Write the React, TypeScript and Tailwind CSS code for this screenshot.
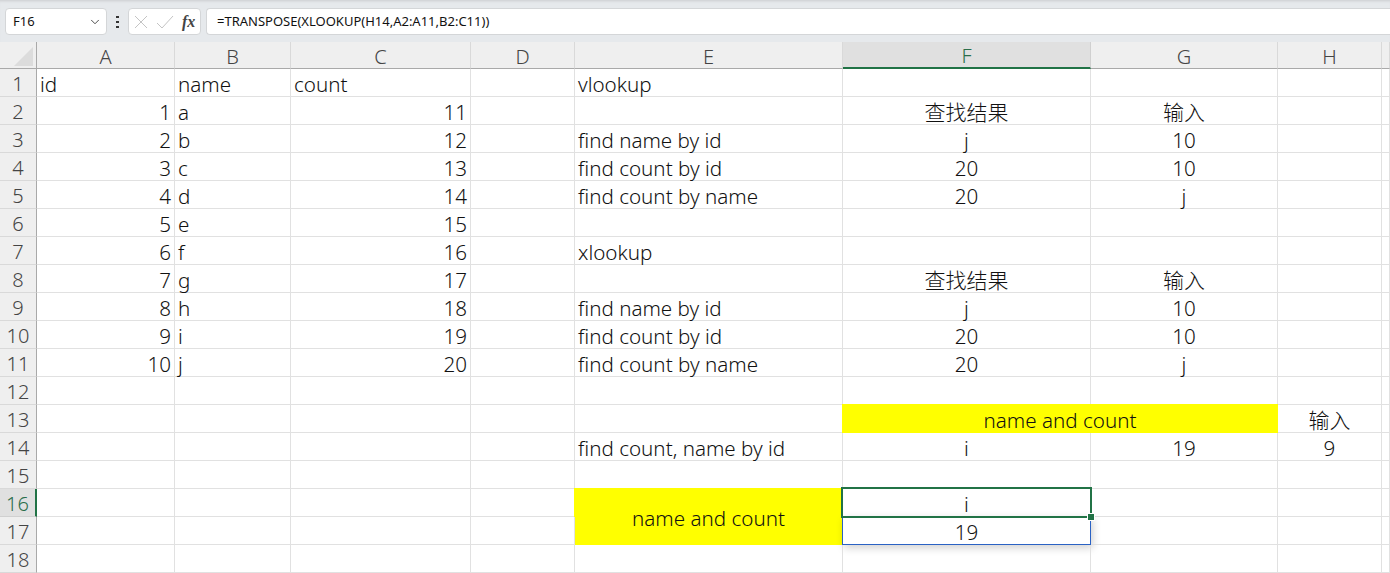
import { ChevronDown } from "lucide-react"

const font = "font-['Noto_Sans','Noto_Sans_CJK_SC',sans-serif]"
const columns = ["A", "B", "C", "D", "E", "F", "G", "H", ""]
const rowCount = 18

type Cell = { text?: string; align?: "l" | "r" | "c"; fill?: boolean; wide?: boolean; tall?: boolean; cjk?: boolean }

const L = (text: string): Cell => ({ text, align: "l" })
const R = (text: string): Cell => ({ text, align: "r" })
const C = (text: string): Cell => ({ text, align: "c" })
const K = (text: string): Cell => ({ text, align: "c", cjk: true })

const cells: Record<string, Cell> = {
  A1: L("id"), B1: L("name"), C1: L("count"), E1: L("vlookup"),
  F2: K("查找结果"), G2: K("输入"),
  E3: L("find name by id"), F3: C("j"), G3: C("10"),
  E4: L("find count by id"), F4: C("20"), G4: C("10"),
  E5: L("find count by name"), F5: C("20"), G5: C("j"),
  E7: L("xlookup"),
  F8: K("查找结果"), G8: K("输入"),
  E9: L("find name by id"), F9: C("j"), G9: C("10"),
  E10: L("find count by id"), F10: C("20"), G10: C("10"),
  E11: L("find count by name"), F11: C("20"), G11: C("j"),
  F13: { text: "name and count", align: "c", fill: true, wide: true }, H13: K("输入"),
  E14: L("find count, name by id"), F14: C("i"), G14: C("19"), H14: C("9"),
  E16: { text: "name and count", align: "c", fill: true, tall: true },
  F16: C("i"), F17: C("19"),
}

"abcdefghij".split("").forEach((name, i) => {
  cells[`A${i + 2}`] = R(String(i + 1))
  cells[`B${i + 2}`] = L(name)
  cells[`C${i + 2}`] = R(String(i + 11))
})

function GridCell({ id }: { id: string }) {
  const cell = cells[id] ?? {}
  const alignClass =
    cell.align === "r" ? "justify-end pr-[3px]" : cell.align === "c" ? "justify-center" : "justify-start pl-[3px]"
  const spanClass = cell.wide ? "col-span-2" : cell.tall ? "row-span-2" : ""
  const fillClass = cell.fill ? "bg-[#ffff00] -ml-px -mt-px border-none" : "border-r border-b border-[#e1e1e1]"

  return (
    <div className={`relative flex items-center whitespace-nowrap pt-[3px] ${alignClass} ${spanClass} ${fillClass}`}>
      <span className={cell.cjk ? "text-[21px]" : ""}>{cell.text}</span>
      {id === "F17" && (
        <div className="absolute -left-px -top-px right-[-1px] bottom-[-1px] border border-[#2a62c4] shadow-[2px_3px_8px_rgba(0,0,0,0.18)]" />
      )}
      {id === "F16" && (
        <>
          <div className="absolute left-[-2px] top-[-2px] right-[-2px] bottom-[-2px] z-10 border-[2px] border-[#217346]" />
          <div className="absolute right-[-4px] bottom-[-4px] z-20 h-[6px] w-[6px] bg-[#217346] outline outline-1 outline-white" />
        </>
      )}
    </div>
  )
}

export default function App() {
  return (
    <div className={`h-[573px] w-[1390px] overflow-hidden bg-white text-[#111] ${font}`}>
      {/* formula bar */}
      <div className="flex h-[42px] items-start bg-[#e6e9ec] pl-[5px] pt-[8px] shadow-[inset_0_3px_3px_-2px_rgba(0,0,0,0.12)]">
        <div className="flex h-[27px] w-[102px] items-center justify-between rounded-[4px] border border-[#d4d6d8] bg-white pl-[7px] pr-[4px] text-[13px]">
          <span>F16</span>
          <ChevronDown className="h-[14px] w-[14px] text-[#333]" strokeWidth={1.5} />
        </div>
        <div className="mx-[9px] flex h-[27px] flex-col justify-center gap-[3px]">
          <span className="h-[2px] w-[3px] bg-[#333]" />
          <span className="h-[2px] w-[3px] bg-[#333]" />
          <span className="h-[2px] w-[3px] bg-[#333]" />
        </div>
        <div className="flex h-[27px] w-[73px] items-center rounded-[4px] border border-[#d4d6d8] bg-white pl-[5px]">
          <svg width="14" height="14" viewBox="0 0 14 14" className="text-[#c4c4c4]" fill="none" stroke="currentColor">
            <path d="M1 1l12 12M13 1L1 13" />
          </svg>
          <svg width="18" height="14" viewBox="0 0 18 14" className="ml-[8px] text-[#c4c4c4]" fill="none" stroke="currentColor">
            <path d="M1 8l5 5L17 1" />
          </svg>
          <span className="ml-[8px] font-['Liberation_Serif',serif] text-[16px] font-bold italic text-[#444]">fx</span>
        </div>
        <div className="ml-[5px] flex h-[27px] flex-1 items-center rounded-l-[4px] border border-r-0 border-[#d4d6d8] bg-white pl-[10px] text-[13px]">
          =TRANSPOSE(XLOOKUP(H14,A2:A11,B2:C11))
        </div>
      </div>

      {/* sheet */}
      <div className="grid grid-cols-[37px_138px_116px_180px_104px_268px_248px_187px_104px_1fr] grid-rows-[27px] auto-rows-[28px] text-[20.6px] font-light leading-none">
        <div className="relative border-r border-b border-[#a9a9a9] bg-[#efefef]">
          <div className="absolute bottom-[2px] right-[3px] h-0 w-0 border-b-[19px] border-l-[19px] border-b-[#dcdcdc] border-l-transparent" />
        </div>
        {columns.map((col) => (
          <div
            key={col}
            className={
              col === "F"
                ? "flex items-center justify-center border-r border-b-[2px] border-r-[#d0d0d0] border-b-[#217346] bg-[#e0e0e0] pt-[3px] text-[20px] text-[#2b6e4b]"
                : "flex items-center justify-center border-r border-b border-r-[#d9d9d9] border-b-[#a9a9a9] bg-[#efefef] pt-[3px] text-[20px] text-[#444]"
            }
          >
            {col}
          </div>
        ))}
        {Array.from({ length: rowCount }, (_, r) => r + 1).flatMap((row) => [
          <div
            key={`h${row}`}
            className={
              row === 16
                ? "flex items-center justify-center border-r-[2px] border-b border-r-[#217346] border-b-[#d0d0d0] bg-[#e0e0e0] pt-[3px] text-[20px] text-[#2b6e4b]"
                : "flex items-center justify-center border-r border-b border-r-[#a9a9a9] border-b-[#d9d9d9] bg-[#efefef] pt-[3px] text-[20px] text-[#444]"
            }
          >
            {row}
          </div>,
          ...columns
            .filter((col) => !(col === "G" && row === 13) && !(col === "E" && row === 17))
            .map((col) => <GridCell key={`${col}${row}`} id={`${col}${row}`} />),
        ])}
      </div>
    </div>
  )
}
